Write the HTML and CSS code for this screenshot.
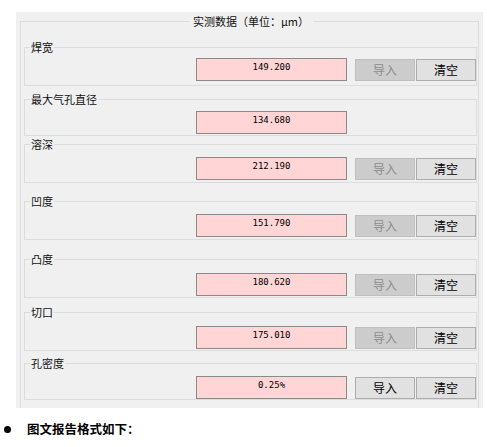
FILE: index.html
```html
<!DOCTYPE html>
<html lang="zh-CN">
<head>
<meta charset="utf-8">
<title>实测数据</title>
<link rel="stylesheet" href="styles.css">
</head>
<body>
<div class="panel">
  <fieldset class="outer">
    <legend class="title">实测数据（单位：μm）</legend>
    <div class="group">
      <div class="glabel">焊宽</div>
      <div class="row"><div class="field">149.200</div><button class="btn off">导入</button><button class="btn">清空</button></div>
    </div>
    <div class="group">
      <div class="glabel">最大气孔直径</div>
      <div class="row"><div class="field">134.680</div></div>
    </div>
    <div class="group">
      <div class="glabel">溶深</div>
      <div class="row"><div class="field">212.190</div><button class="btn off">导入</button><button class="btn">清空</button></div>
    </div>
    <div class="group">
      <div class="glabel">凹度</div>
      <div class="row"><div class="field">151.790</div><button class="btn off">导入</button><button class="btn">清空</button></div>
    </div>
    <div class="group">
      <div class="glabel">凸度</div>
      <div class="row"><div class="field">180.620</div><button class="btn off">导入</button><button class="btn">清空</button></div>
    </div>
    <div class="group">
      <div class="glabel">切口</div>
      <div class="row"><div class="field">175.010</div><button class="btn off">导入</button><button class="btn">清空</button></div>
    </div>
    <div class="group">
      <div class="glabel">孔密度</div>
      <div class="row"><div class="field">0.25%</div><button class="btn">导入</button><button class="btn">清空</button></div>
    </div>
  </fieldset>
</div>
<div class="bullet-line"><span class="dot"></span><span class="bullet-text">图文报告格式如下：</span></div>
</body>
</html>
```
FILE: styles.css
```css
html, body {
  margin: 0;
  padding: 0;
  background: #ffffff;
}
body {
  font-family: "Noto Sans CJK SC", "Liberation Sans", sans-serif;
  font-size: 11px;
  color: #000;
}
.panel {
  margin: 12px 0 0 16px;
  width: 467px;
  height: 396px;
  background: #f0f0f0;
  overflow: hidden;
}
.outer {
  box-sizing: border-box;
  margin: 3px 0 0 4px;
  width: 459px;
  height: 460px;
  padding: 19px 0 0 3px;
  border: 1px solid #dcdcdc;
  min-width: 0;
}
.title {
  margin: 0 auto;
  padding: 0 4px;
  line-height: 13px;
  font-size: 11px;
  color: #111;
}
.group {
  box-sizing: border-box;
  width: 453px;
  height: 39px;
  border: 1px solid #dcdcdc;
}
.group:nth-of-type(2) { margin-top: 13px; height: 37px; }
.group:nth-of-type(3) { margin-top: 8px; }
.group:nth-of-type(4) { margin-top: 18px; }
.group:nth-of-type(5) { margin-top: 19px; }
.group:nth-of-type(6) { margin-top: 14px; }
.group:nth-of-type(7) { margin-top: 12px; height: 37px; }
.glabel {
  width: fit-content;
  margin: -7px 0 0 5px;
  padding: 0 1px;
  line-height: 13px;
  background: #f0f0f0;
  color: #111;
}
.row {
  display: flex;
  align-items: flex-start;
  margin: 5px 0 0 171px;
}
.group:nth-of-type(1) .row { margin-top: 4px; }
.group:nth-of-type(3) .row,
.group:nth-of-type(4) .row,
.group:nth-of-type(7) .row { margin-top: 6px; }
.group:nth-of-type(5) .row,
.group:nth-of-type(6) .row { margin-top: 7px; }
.field {
  box-sizing: border-box;
  width: 151px;
  height: 23px;
  padding-top: 3px;
  background: #ffd5d5;
  border: 1px solid #8a8a8a;
  text-align: center;
  font-family: "DejaVu Sans Mono", "Liberation Mono", monospace;
  font-size: 9px;
  line-height: 11px;
  color: #000;
}
.btn {
  box-sizing: border-box;
  width: 60px;
  height: 22px;
  margin: 1px 0 0 1px;
  padding: 0;
  background: #e1e1e1;
  border: 1px solid #adadad;
  font-family: "Noto Sans CJK SC", sans-serif;
  font-size: 12px;
  line-height: 18px;
  color: #000;
}
.field + .btn {
  margin-left: 8px;
}
.btn.off {
  background: #cccccc;
  border-color: #bfbfbf;
  color: #8d8d8d;
}
.bullet-line {
  display: flex;
  align-items: center;
  margin: 13px 0 0 4px;
  height: 16px;
}
.dot {
  width: 7px;
  height: 7px;
  border-radius: 50%;
  background: #000;
}
.bullet-text {
  margin-left: 16px;
  font-family: "Noto Sans CJK SC", sans-serif;
  font-weight: bold;
  font-size: 12.5px;
  line-height: 16px;
}
```
